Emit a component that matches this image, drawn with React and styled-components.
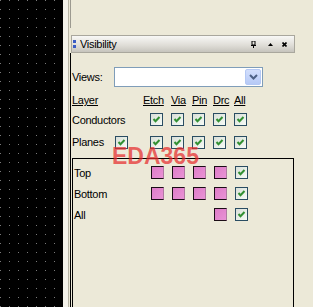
import React from 'react';
import styled, { createGlobalStyle } from 'styled-components';

const GlobalStyle = createGlobalStyle`
  html, body {
    margin: 0;
    padding: 0;
    background: #ece9d8;
  }
  body {
    font-family: "Liberation Sans", Arial, sans-serif;
    font-size: 11px;
    letter-spacing: -0.3px;
    color: #000;
  }
`;

const COLUMNS = ['Etch', 'Via', 'Pin', 'Drc', 'All'];

const Screen = styled.div`
  position: relative;
  display: flex;
  width: 313px;
  height: 307px;
  overflow: hidden;
`;

const Canvas = styled.div`
  width: 63px;
  flex-shrink: 0;
  background-color: #000;
  background-image: radial-gradient(circle, #7a7a7a 0.6px, transparent 1px);
  background-size: 9px 9px;
  background-position: 5px 5px;
`;

const Gutter = styled.div`
  width: 5px;
  flex-shrink: 0;
  margin-right: 1px;
  background: #f4f2ea;
  border-right: 1px solid #b8b5a6;
`;

const Dock = styled.div`
  width: 225px;
  flex-shrink: 0;
  display: flex;
  flex-direction: column;
`;

const Stub = styled.div`
  height: 28px;
  margin-bottom: 7px;
  border-left: 1px solid #9c9a90;
`;

const TitleBar = styled.div`
  height: 16px;
  margin-left: 1px;
  border: 1px solid #a9a79d;
  background: linear-gradient(#f8f8f6, #dedcd6 60%, #c6c4bd);
  display: flex;
  align-items: center;
  padding-left: 1px;
  padding-right: 7px;
`;

const Title = styled.span`
  margin-left: 4px;
  flex: 1;
`;

const TitleIcon = styled.svg`
  display: block;
  margin-left: ${p => p.$gap || 0}px;
`;

const Body = styled.div`
  flex: 1;
  display: flex;
  flex-direction: column;
  border-left: 1px solid #000;
  padding-left: 1px;
`;

const ViewsRow = styled.div`
  display: flex;
  align-items: center;
  height: 20px;
  margin-top: 14px;
`;

const ViewsLabel = styled.span`
  width: 42px;
`;

const Combo = styled.div`
  width: 149px;
  height: 20px;
  box-sizing: border-box;
  border: 1px solid #7f9db9;
  background: #fff;
  padding: 1px;
  display: flex;
  justify-content: flex-end;
`;

const ComboButton = styled.div`
  width: 16px;
  height: 16px;
  box-sizing: border-box;
  border: 1px solid #b4c8f4;
  border-radius: 2px;
  background: linear-gradient(#d2defc, #b6c9f6);
  display: flex;
  align-items: center;
  justify-content: center;
`;

const LayerGrid = styled.div`
  display: grid;
  grid-template-columns: ${p => p.$first}px repeat(5, 21px);
  grid-template-rows: ${p => p.$rows};
  align-items: center;
  margin-top: ${p => p.$top || 0}px;
`;

const Head = styled.span`
  text-decoration: underline;
  margin-left: ${p => p.$shift || 0}px;
  white-space: nowrap;
`;

const RowLabel = styled.span`
  display: flex;
  align-items: center;
`;

const RowText = styled.span`
  width: ${p => p.$width || 'auto'};
`;

const Box = styled.span`
  width: 13px;
  height: 13px;
  box-sizing: border-box;
  border: 1px solid #2a4d62;
  background: linear-gradient(135deg, #d9dfd8, #f6fbf6);
  display: inline-flex;
  align-items: center;
  justify-content: center;
`;

const Swatch = styled.span`
  width: 13px;
  height: 13px;
  box-sizing: border-box;
  border: 1px solid #1b0d16;
  border-right-color: #b07aa2;
  background: linear-gradient(135deg, #de7cc8, #e993d5);
`;

const GroupBox = styled.div`
  flex: 1;
  margin-top: 4px;
  margin-right: 1px;
  border: 1px solid #000;
  border-bottom: none;
  padding: 3px 0 0 1px;
`;

const Watermark = styled.div`
  position: absolute;
  left: 112px;
  top: 143px;
  font-family: "Liberation Sans", Arial, sans-serif;
  font-weight: bold;
  font-size: 23px;
  letter-spacing: 0;
  color: rgba(230, 45, 45, 0.72);
  pointer-events: none;
`;

const Check = () => (
  <Box>
    <svg width="11" height="11" viewBox="0 0 11 11">
      <polyline points="2.5,5 4.5,7.2 8.5,3" fill="none" stroke="#329032" strokeWidth="2" />
    </svg>
  </Box>
);

const Grip = () => (
  <svg width="3" height="8" viewBox="0 0 3 8" style={{ display: 'block' }}>
    <rect x="0" y="0" width="3" height="3" fill="#3a5cc4" />
    <rect x="0" y="5" width="3" height="3" fill="#3a5cc4" />
  </svg>
);

const App = () => {
  const groups = [
    { name: 'Top', cells: ['s', 's', 's', 's', 'c'] },
    { name: 'Bottom', cells: ['s', 's', 's', 's', 'c'] },
    { name: 'All', cells: [null, null, null, 's', 'c'] },
  ];

  return (
    <Screen>
      <GlobalStyle />
      <Canvas />
      <Gutter />
      <Dock>
        <Stub />
        <TitleBar>
          <Grip />
          <Title>Visibility</Title>
          <TitleIcon width="5" height="7" viewBox="0 0 5 7">
            <rect x="1" y="0" width="3" height="4" fill="none" stroke="#000" strokeWidth="1" />
            <rect x="0" y="4" width="5" height="1" fill="#000" />
            <rect x="2" y="5" width="1" height="2" fill="#000" />
          </TitleIcon>
          <TitleIcon $gap={12} width="5" height="3" viewBox="0 0 5 3">
            <polygon points="0,3 5,3 2.5,0" fill="#000" />
          </TitleIcon>
          <TitleIcon $gap={9} width="5" height="5" viewBox="0 0 5 5">
            <path d="M0.5 0.5 L4.5 4.5 M4.5 0.5 L0.5 4.5" stroke="#000" strokeWidth="1.6" />
          </TitleIcon>
        </TitleBar>
        <Body>
          <ViewsRow>
            <ViewsLabel>Views:</ViewsLabel>
            <Combo>
              <ComboButton>
                <svg width="9" height="6" viewBox="0 0 9 6">
                  <polyline points="1,1 4.5,4.5 8,1" fill="none" stroke="#4d6185" strokeWidth="2" />
                </svg>
              </ComboButton>
            </Combo>
          </ViewsRow>

          <LayerGrid $first={78} $rows="18px 21px 24px" $top={4}>
            <Head>Layer</Head>
            {COLUMNS.map((c, i) => (
              <Head key={c} $shift={i === 0 ? -7 : 0}>{c}</Head>
            ))}
            <RowLabel>Conductors</RowLabel>
            {COLUMNS.map(c => <Check key={c} />)}
            <RowLabel>
              <RowText $width="43px">Planes</RowText>
              <Check />
            </RowLabel>
            {COLUMNS.map(c => <Check key={c} />)}
          </LayerGrid>

          <GroupBox>
            <LayerGrid $first={77} $rows="21px 21px 21px">
              {groups.map(g => (
                <React.Fragment key={g.name}>
                  <RowLabel>{g.name}</RowLabel>
                  {g.cells.map((cell, i) => {
                    if (cell === 's') return <Swatch key={i} />;
                    if (cell === 'c') return <Check key={i} />;
                    return <span key={i} />;
                  })}
                </React.Fragment>
              ))}
            </LayerGrid>
          </GroupBox>
        </Body>
      </Dock>
      <Watermark>EDA365</Watermark>
    </Screen>
  );
};

export default App;
